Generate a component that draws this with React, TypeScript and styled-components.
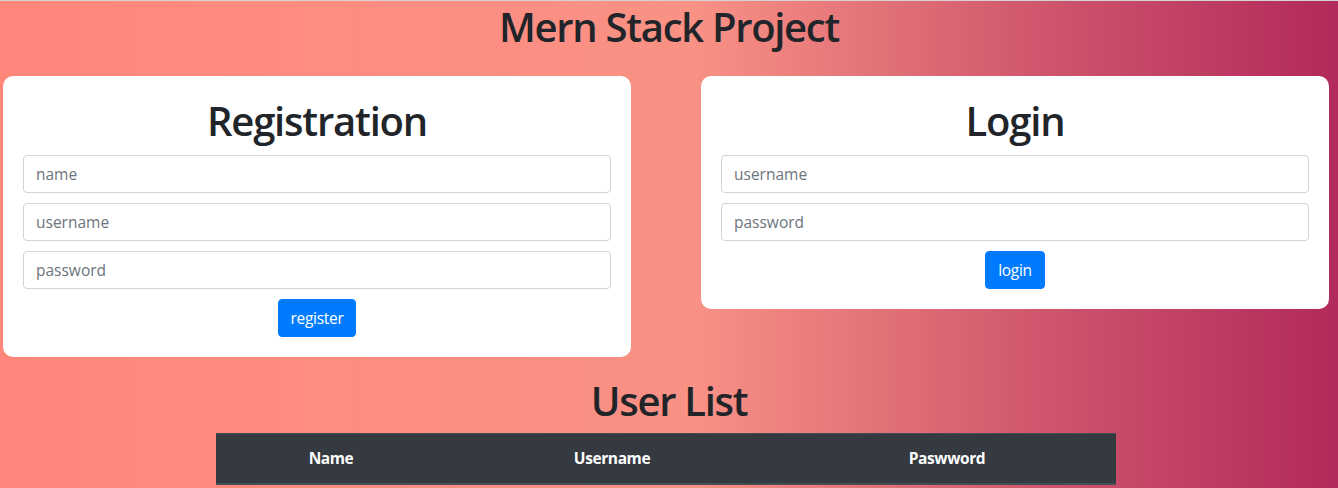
import * as React from 'react';
import styled, { createGlobalStyle } from 'styled-components';

const GlobalStyle = createGlobalStyle`
    * {
        box-sizing: border-box;
    }

    body {
        margin: 0;
        font-family: "Open Sans", "Noto Sans", sans-serif;
        color: #212529;
    }
`

const Page = styled.div`
    min-height: 488px;
    border-top: 1px solid #d4d4d4;
    background: linear-gradient(to right, #ff8177 0%, #ff867a 0%, #ff8c7f 21%, #f99185 52%, #cf556c 78%, #b12a5b 100%);
    overflow: hidden;
`

const Title = styled.h1`
    margin: 0 0 25px;
    padding-top: 2px;
    font-size: 40px;
    font-weight: 600;
    line-height: 48px;
    text-align: center;
    letter-spacing: -1.3px;
`

const Row = styled.div`
    display: flex;
    align-items: flex-start;
    gap: 70px;
    padding-left: 3px;
`

const Card = styled.div`
    width: 628px;
    background: #fff;
    border-radius: 10px;
    padding: 21px 20px 20px;
    display: flex;
    flex-direction: column;
    align-items: center;
`

const CardTitle = styled.h1`
    margin: 0 0 10px;
    font-size: 40px;
    font-weight: 600;
    line-height: 48px;
    letter-spacing: -1.2px;
`

const Input = styled.input`
    width: 100%;
    height: 38px;
    margin-bottom: 10px;
    padding: 6px 12px;
    font-family: inherit;
    font-size: 15.5px;
    color: #495057;
    background: #fff;
    border: 1px solid #ced4da;
    border-radius: 4px;
    outline: none;

    &::placeholder {
        color: #6c757d;
    }
`

const Button = styled.button`
    height: 38px;
    padding: 0 12px;
    font-family: inherit;
    font-size: 15.5px;
    letter-spacing: -0.3px;
    color: #fff;
    background: #007bff;
    border: 1px solid #007bff;
    border-radius: 4px;
    cursor: pointer;
`

const SubTitle = styled(Title)`
    margin: 20px 0 8px;
    padding-top: 0;
`

const Table = styled.table`
    width: 900px;
    margin: 0 0 0 216px;
    border-collapse: collapse;
    table-layout: fixed;
`

const Th = styled.th<{ w: number }>`
    width: ${p => p.w}px;
    padding: 12px;
    font-size: 15.5px;
    font-weight: 700;
    line-height: 25px;
    letter-spacing: -0.4px;
    color: #fff;
    background: #343a40;
    border-top: 1px solid #454d55;
    border-bottom: 2px solid #454d55;
    text-align: center;
`

export default function App() {
    return (
        <>
            <GlobalStyle/>
            <Page>
                <Title>Mern Stack Project</Title>
                <Row>
                    <Card>
                        <CardTitle>Registration</CardTitle>
                        <Input placeholder="name"/>
                        <Input placeholder="username"/>
                        <Input placeholder="password" type="password"/>
                        <Button>register</Button>
                    </Card>
                    <Card>
                        <CardTitle>Login</CardTitle>
                        <Input placeholder="username"/>
                        <Input placeholder="password" type="password"/>
                        <Button>login</Button>
                    </Card>
                </Row>
                <SubTitle>User List</SubTitle>
                <Table>
                    <thead>
                    <tr>
                        <Th w={230}>Name</Th>
                        <Th w={332}>Username</Th>
                        <Th w={338}>Paswword</Th>
                    </tr>
                    </thead>
                </Table>
            </Page>
        </>
    );
}
